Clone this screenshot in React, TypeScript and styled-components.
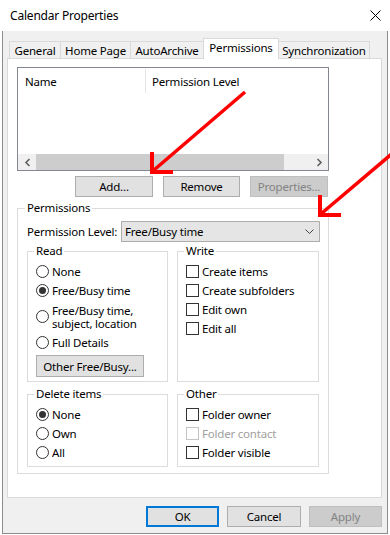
import React from "react";
import styled, { createGlobalStyle } from "styled-components";

const GlobalStyle = createGlobalStyle`
  * { box-sizing: border-box; }
  body {
    margin: 0;
    background: #ffffff;
    font-family: "Noto Sans", "Open Sans", sans-serif;
    font-size: 11.5px;
    letter-spacing: -0.2px;
    color: #000000;
  }
`;

const Screen = styled.div`
  position: relative;
  width: 390px;
  height: 535px;
  overflow: hidden;
  background: #ffffff;
`;

const Window = styled.div`
  margin-left: 2px;
  width: 386px;
  height: 534px;
  display: flex;
  flex-direction: column;
`;

const TitleBar = styled.div`
  height: 31px;
  display: flex;
  align-items: center;
  justify-content: space-between;
  padding: 0 7px 0 8px;
  background: #ffffff;
`;

const Title = styled.span`
  font-size: 12px;
`;

const Body = styled.div`
  flex: 1;
  background: #f0f0f0;
  border: 1px solid #8c8c8c;
  border-top: none;
  padding: 7px 5px 0 4px;
  display: flex;
  flex-direction: column;
`;

const TabStrip = styled.div`
  display: flex;
  align-items: flex-end;
  height: 21px;
  margin-bottom: -1px;
  padding-left: 2px;
  position: relative;
  z-index: 1;
`;

const Tab = styled.div<{ $width: number; $active?: boolean }>`
  width: ${(p) => p.$width}px;
  height: ${(p) => (p.$active ? 21 : 18)}px;
  margin-right: -1px;
  border: 1px solid #d9d9d9;
  border-bottom: ${(p) => (p.$active ? "none" : "1px solid #d9d9d9")};
  background: ${(p) => (p.$active ? "#ffffff" : "#f0f0f0")};
  position: relative;
  z-index: ${(p) => (p.$active ? 2 : 1)};
  display: flex;
  align-items: center;
  justify-content: center;
  padding-bottom: ${(p) => (p.$active ? 3 : 0)}px;
  white-space: nowrap;
`;

const TabPanel = styled.div`
  height: 440px;
  background: #ffffff;
  border: 1px solid #d9d9d9;
  padding: 8px 9px 0 9px;
`;

const ListView = styled.div`
  width: 312px;
  height: 104px;
  border: 1px solid #828790;
  display: flex;
  flex-direction: column;
`;

const ListHeader = styled.div`
  display: flex;
  height: 25px;
  padding-top: 1px;
`;

const HeaderCell = styled.div<{ $width?: number; $divider?: boolean }>`
  width: ${(p) => (p.$width ? `${p.$width}px` : "auto")};
  flex: ${(p) => (p.$width ? "none" : 1)};
  border-right: ${(p) => (p.$divider ? "1px solid #e5e5e5" : "none")};
  padding-left: ${(p) => (p.$divider ? 7 : 6)}px;
  display: flex;
  align-items: center;
  white-space: nowrap;
`;

const ListBody = styled.div`
  flex: 1;
`;

const ScrollBar = styled.div`
  height: 16px;
  display: flex;
  background: #f0f0f0;
`;

const ScrollArrow = styled.div`
  width: 18px;
  display: flex;
  align-items: center;
  justify-content: center;
`;

const ScrollTrack = styled.div`
  flex: 1;
  display: flex;
`;

const ScrollThumb = styled.div<{ $width: number }>`
  width: ${(p) => p.$width}px;
  background: #cdcdcd;
`;

const ButtonRow = styled.div<{ $gap: number }>`
  display: flex;
  justify-content: flex-end;
  gap: ${(p) => p.$gap}px;
`;

const ListButtons = styled(ButtonRow)`
  width: 312px;
  margin-top: 5px;
  padding-right: 1px;
`;

const Button = styled.button<{ $width: number; $default?: boolean }>`
  width: ${(p) => p.$width}px;
  height: 21px;
  padding: 0;
  font-family: inherit;
  font-size: 11.5px;
  letter-spacing: -0.2px;
  color: #000000;
  background: #e1e1e1;
  border: ${(p) => (p.$default ? "2px solid #0078d7" : "1px solid #adadad")};
  display: flex;
  align-items: center;
  justify-content: center;
  white-space: nowrap;
  &:disabled {
    background: #cccccc;
    border-color: #bfbfbf;
    color: #838383;
  }
`;

const Group = styled.fieldset<{ $pad: number }>`
  margin: 0;
  min-width: 0;
  border: 1px solid #dcdcdc;
  padding: 0 ${(p) => p.$pad}px ${(p) => p.$pad - 2}px ${(p) => p.$pad}px;
`;

const PermissionsGroup = styled(Group)`
  width: 312px;
  margin-top: 3px;
  padding-bottom: 6px;
`;

const Legend = styled.legend`
  padding: 0 2px;
  margin-left: -2px;
  line-height: 16px;
`;

const LevelRow = styled.div`
  display: flex;
  align-items: center;
  justify-content: space-between;
  margin-top: 5px;
  white-space: nowrap;
`;

const Select = styled.div`
  width: 199px;
  height: 21px;
  margin-right: -1px;
  background: #e5e5e5;
  border: 1px solid #adadad;
  display: flex;
  align-items: center;
  justify-content: space-between;
  padding: 0 5px 0 3px;
`;

const GroupGrid = styled.div`
  display: grid;
  grid-template-columns: 141px 142px;
  column-gap: 9px;
  row-gap: 4px;
  margin-top: 1px;
`;

const SubGroup = styled(Group)`
  padding: 3px 8px 4px 8px;
`;

const OptionRow = styled.div<{ $tall?: boolean; $disabled?: boolean }>`
  height: ${(p) => (p.$tall ? 33 : 19)}px;
  display: flex;
  align-items: center;
  gap: 3px;
  color: ${(p) => (p.$disabled ? "#a0a0a0" : "#000000")};
  white-space: nowrap;
`;

const TwoLine = styled.span`
  line-height: 13px;
  white-space: pre;
`;

const Radio = styled.span<{ $checked?: boolean }>`
  width: 13px;
  height: 13px;
  flex: none;
  border: 1px solid #333333;
  border-radius: 50%;
  background: #ffffff;
  display: flex;
  align-items: center;
  justify-content: center;
  &::after {
    content: "";
    width: 7px;
    height: 7px;
    border-radius: 50%;
    background: #333333;
    display: ${(p) => (p.$checked ? "block" : "none")};
  }
`;

const Check = styled.span<{ $disabled?: boolean }>`
  width: 13px;
  height: 13px;
  flex: none;
  border: 1px solid ${(p) => (p.$disabled ? "#c4c4c4" : "#333333")};
  background: #ffffff;
`;

const OtherButton = styled(Button)`
  margin-top: 3px;
  height: 22px;
`;

const DialogButtons = styled(ButtonRow)`
  margin-top: 8px;
`;

const Annotations = styled.svg`
  position: absolute;
  top: 0;
  left: 0;
  pointer-events: none;
`;

const Chevron = ({ dir }: { dir: "left" | "right" }) => (
  <svg width="7" height="9" viewBox="0 0 7 9">
    <path
      d={dir === "left" ? "M5.5 1 L2 4.5 L5.5 8" : "M1.5 1 L5 4.5 L1.5 8"}
      fill="none"
      stroke="#606060"
      strokeWidth="1.6"
    />
  </svg>
);

const RedArrow = ({ x1, y1, tx, ty }: { x1: number; y1: number; tx: number; ty: number }) => (
  <g stroke="#ff0000" fill="none">
    <line x1={x1} y1={y1} x2={tx + 2} y2={ty - 2} strokeWidth="3.5" />
    <polyline points={`${tx},${ty - 20} ${tx},${ty} ${tx + 21},${ty}`} strokeWidth="4" strokeLinejoin="miter" />
  </g>
);

export default function App() {
  return (
    <>
      <GlobalStyle />
      <Screen>
        <Window>
          <TitleBar>
            <Title>Calendar Properties</Title>
            <svg width="11" height="11" viewBox="0 0 11 11">
              <path d="M0.5 0.5 L10.5 10.5 M10.5 0.5 L0.5 10.5" stroke="#000" strokeWidth="1" />
            </svg>
          </TitleBar>
          <Body>
            <TabStrip>
              <Tab $width={52}>General</Tab>
              <Tab $width={71}>Home Page</Tab>
              <Tab $width={74}>AutoArchive</Tab>
              <Tab $width={76} $active>
                Permissions
              </Tab>
              <Tab $width={92}>Synchronization</Tab>
            </TabStrip>
            <TabPanel>
              <ListView>
                <ListHeader>
                  <HeaderCell $width={128} $divider>
                    Name
                  </HeaderCell>
                  <HeaderCell>Permission Level</HeaderCell>
                </ListHeader>
                <ListBody />
                <ScrollBar>
                  <ScrollArrow>
                    <Chevron dir="left" />
                  </ScrollArrow>
                  <ScrollTrack>
                    <ScrollThumb $width={248} />
                  </ScrollTrack>
                  <ScrollArrow>
                    <Chevron dir="right" />
                  </ScrollArrow>
                </ScrollBar>
              </ListView>
              <ListButtons $gap={10}>
                <Button $width={78}>Add...</Button>
                <Button $width={77}>Remove</Button>
                <Button $width={78} disabled>
                  Properties...
                </Button>
              </ListButtons>
              <PermissionsGroup $pad={9}>
                <Legend>Permissions</Legend>
                <LevelRow>
                  <span>Permission Level:</span>
                  <Select>
                    <span>Free/Busy time</span>
                    <svg width="9" height="5" viewBox="0 0 9 5">
                      <path d="M0.5 0.5 L4.5 4.5 L8.5 0.5" fill="none" stroke="#444" strokeWidth="1" />
                    </svg>
                  </Select>
                </LevelRow>
                <GroupGrid>
                  <SubGroup $pad={8}>
                    <Legend>Read</Legend>
                    <OptionRow>
                      <Radio />
                      None
                    </OptionRow>
                    <OptionRow>
                      <Radio $checked />
                      Free/Busy time
                    </OptionRow>
                    <OptionRow $tall>
                      <Radio />
                      <TwoLine>{"Free/Busy time,\nsubject, location"}</TwoLine>
                    </OptionRow>
                    <OptionRow>
                      <Radio />
                      Full Details
                    </OptionRow>
                    <OtherButton $width={108}>Other Free/Busy...</OtherButton>
                  </SubGroup>
                  <SubGroup $pad={8}>
                    <Legend>Write</Legend>
                    <OptionRow>
                      <Check />
                      Create items
                    </OptionRow>
                    <OptionRow>
                      <Check />
                      Create subfolders
                    </OptionRow>
                    <OptionRow>
                      <Check />
                      Edit own
                    </OptionRow>
                    <OptionRow>
                      <Check />
                      Edit all
                    </OptionRow>
                  </SubGroup>
                  <SubGroup $pad={8}>
                    <Legend>Delete items</Legend>
                    <OptionRow>
                      <Radio $checked />
                      None
                    </OptionRow>
                    <OptionRow>
                      <Radio />
                      Own
                    </OptionRow>
                    <OptionRow>
                      <Radio />
                      All
                    </OptionRow>
                  </SubGroup>
                  <SubGroup $pad={8}>
                    <Legend>Other</Legend>
                    <OptionRow>
                      <Check />
                      Folder owner
                    </OptionRow>
                    <OptionRow $disabled>
                      <Check $disabled />
                      Folder contact
                    </OptionRow>
                    <OptionRow>
                      <Check />
                      Folder visible
                    </OptionRow>
                  </SubGroup>
                </GroupGrid>
              </PermissionsGroup>
            </TabPanel>
            <DialogButtons $gap={8}>
              <Button $width={73} $default>
                OK
              </Button>
              <Button $width={74}>Cancel</Button>
              <Button $width={73} disabled>
                Apply
              </Button>
            </DialogButtons>
          </Body>
        </Window>
        <Annotations width="390" height="535" viewBox="0 0 390 535">
          <RedArrow x1={245} y1={92} tx={152} ty={172} />
          <RedArrow x1={394} y1={152} tx={320} ty={215} />
        </Annotations>
      </Screen>
    </>
  );
}
